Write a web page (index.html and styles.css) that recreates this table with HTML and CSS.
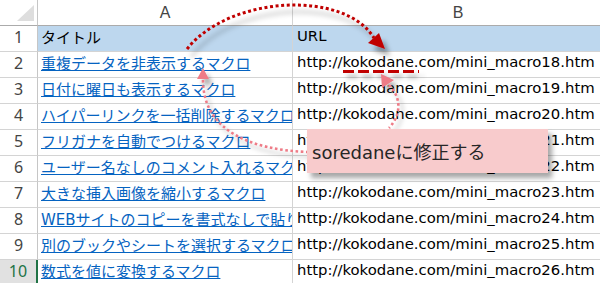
FILE: index.html
```html
<!DOCTYPE html>
<html lang="ja">
<head>
<meta charset="utf-8">
<title>Excel macro list</title>
<link rel="stylesheet" href="styles.css">
</head>
<body>
<div class="sheet">
  <div class="row head">
    <div class="corner"><span class="tri"></span></div>
    <div class="colhead">A</div>
    <div class="colhead">B</div>
  </div>
  <div class="row title">
    <div class="rh">1</div><div class="ca">タイトル</div><div class="cb">URL</div>
  </div>
  <div class="row">
    <div class="rh">2</div><div class="ca"><a>重複データを非表示するマクロ</a></div><div class="cb">http://kokodane.com/mini_macro18.htm</div>
  </div>
  <div class="row">
    <div class="rh">3</div><div class="ca"><a>日付に曜日も表示するマクロ</a></div><div class="cb">http://kokodane.com/mini_macro19.htm</div>
  </div>
  <div class="row">
    <div class="rh">4</div><div class="ca"><a>ハイパーリンクを一括削除するマクロ</a></div><div class="cb">http://kokodane.com/mini_macro20.htm</div>
  </div>
  <div class="row">
    <div class="rh">5</div><div class="ca"><a>フリガナを自動でつけるマクロ</a></div><div class="cb">http://kokodane.com/mini_macro21.htm</div>
  </div>
  <div class="row">
    <div class="rh">6</div><div class="ca"><a>ユーザー名なしのコメント入れるマクロ</a></div><div class="cb">http://kokodane.com/mini_macro22.htm</div>
  </div>
  <div class="row">
    <div class="rh">7</div><div class="ca"><a>大きな挿入画像を縮小するマクロ</a></div><div class="cb">http://kokodane.com/mini_macro23.htm</div>
  </div>
  <div class="row">
    <div class="rh">8</div><div class="ca"><a>WEBサイトのコピーを書式なしで貼り付けるマクロ</a></div><div class="cb">http://kokodane.com/mini_macro24.htm</div>
  </div>
  <div class="row">
    <div class="rh">9</div><div class="ca"><a>別のブックやシートを選択するマクロ</a></div><div class="cb">http://kokodane.com/mini_macro25.htm</div>
  </div>
  <div class="row">
    <div class="rh sel">10</div><div class="ca"><a>数式を値に変換するマクロ</a></div><div class="cb">http://kokodane.com/mini_macro26.htm</div>
  </div>
</div>

<svg class="marks" width="600" height="283" viewBox="0 0 600 283" xmlns="http://www.w3.org/2000/svg">
  <defs>
    <filter id="sh" filterUnits="userSpaceOnUse" x="0" y="0" width="600" height="283">
      <feDropShadow dx="5" dy="7" stdDeviation="2.5" flood-color="#000" flood-opacity="0.35"/>
    </filter>
    <filter id="sh2" filterUnits="userSpaceOnUse" x="0" y="0" width="600" height="283">
      <feDropShadow dx="4" dy="5" stdDeviation="2" flood-color="#000" flood-opacity="0.3"/>
    </filter>
  </defs>
  <g filter="url(#sh)">
    <path d="M187,49 C230,-5 345,-10 374,38" fill="none" stroke="#c00000" stroke-width="3" stroke-dasharray="3 2.6"/>
    <polygon points="368,43 379,33 385,49" fill="#c00000"/>
  </g>
  <g filter="url(#sh2)">
    <path d="M343,71.5 H419" fill="none" stroke="#c00000" stroke-width="3" stroke-dasharray="11 4"/>
  </g>
  <g filter="url(#sh2)">
    <path d="M203,80 C203,130 250,150 308,152" fill="none" stroke="#ee7b87" stroke-width="2.6" stroke-dasharray="2.6 2.6"/>
    <polygon points="203,68 197,79 209,79" fill="#ee7b87"/>
    <path d="M389,85 C402,98 401,115 389,128" fill="none" stroke="#ee7b87" stroke-width="2.6" stroke-dasharray="2.6 2.6"/>
    <polygon points="381,74 382,88 394,80" fill="#ee7b87"/>
  </g>
</svg>

<div class="callout">soredaneに修正する</div>
</body>
</html>
```

FILE: styles.css
```css
html, body {
  margin: 0;
  padding: 0;
  background: #ffffff;
}

body {
  width: 600px;
  height: 283px;
  overflow: hidden;
  position: relative;
}

.sheet {
  width: 600px;
  overflow: hidden;
  font-family: "DejaVu Sans", "Noto Sans CJK JP", sans-serif;
}

.row {
  display: grid;
  grid-template-columns: 38px 255px 331px;
  height: 26px;
}

.row > div {
  box-sizing: border-box;
  border-right: 1px solid #d4d4d4;
  border-bottom: 1px solid #d4d4d4;
  overflow: hidden;
  white-space: nowrap;
}

.head > div {
  border-bottom-color: #ababab;
  font-family: "Liberation Sans", "Noto Sans", sans-serif;
  font-size: 16px;
  color: #444444;
  display: flex;
  align-items: center;
  justify-content: center;
}

.corner {
  position: relative;
  border-right-color: #c6c6c6 !important;
}

.tri {
  position: absolute;
  right: 3px;
  bottom: 4px;
  width: 0;
  height: 0;
  border-left: 17px solid transparent;
  border-bottom: 16px solid #dedede;
}

.rh {
  font-family: "Noto Sans", sans-serif;
  font-size: 16px;
  color: #444444;
  display: flex;
  align-items: center;
  justify-content: center;
  padding-bottom: 4px;
  border-right-color: #c6c6c6 !important;
}

.rh.sel {
  background: #e1e1e1;
  color: #217346;
  border-right: 2px solid #217346 !important;
}

.ca {
  font-size: 15px;
  padding-left: 3px;
  padding-bottom: 5px;
  display: flex;
  align-items: center;
}

.ca a {
  color: #0563c1;
  text-decoration: underline;
  text-underline-offset: 1px;
}

.cb {
  font-size: 14.85px;
  color: #000000;
  padding-left: 4px;
  padding-bottom: 5px;
  display: flex;
  align-items: center;
}

.title .ca,
.title .cb {
  background: #bdd7ee;
  color: #000000;
}

.marks {
  position: absolute;
  left: 0;
  top: 0;
  pointer-events: none;
}

.callout {
  position: absolute;
  left: 307px;
  top: 129px;
  width: 241px;
  height: 44px;
  box-sizing: border-box;
  padding-left: 5px;
  background: #f8cbcc;
  box-shadow: 4px 5px 5px rgba(0, 0, 0, 0.35);
  font-family: "DejaVu Sans", "Noto Sans CJK JP", sans-serif;
  font-size: 18px;
  color: #262626;
  display: flex;
  align-items: center;
}
```
